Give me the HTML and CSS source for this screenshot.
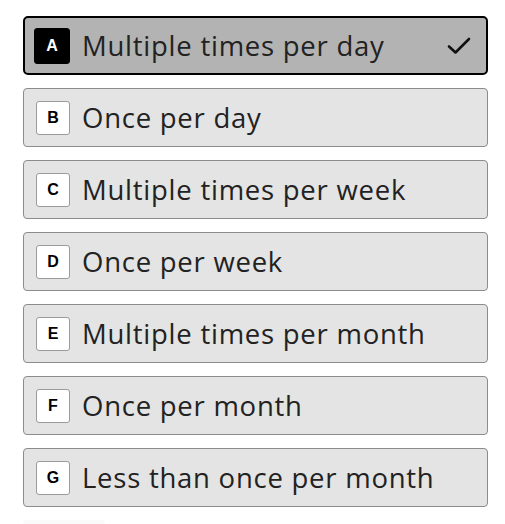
FILE: index.html
```html
<!DOCTYPE html>
<html>
<head>
<meta charset="utf-8">
<link rel="stylesheet" href="styles.css">
</head>
<body>
<div class="list">
  <div class="choice selected"><span class="key">A</span><span class="label">Multiple times per day</span>
    <svg class="check" width="24" height="18" viewBox="0 0 24 18"><path d="M2 9.5 L8.5 15.5 L22 2" fill="none" stroke="#111" stroke-width="2.6" stroke-linecap="round" stroke-linejoin="round"/></svg>
  </div>
  <div class="choice"><span class="key">B</span><span class="label">Once per day</span></div>
  <div class="choice"><span class="key">C</span><span class="label">Multiple times per week</span></div>
  <div class="choice"><span class="key">D</span><span class="label">Once per week</span></div>
  <div class="choice"><span class="key">E</span><span class="label">Multiple times per month</span></div>
  <div class="choice"><span class="key">F</span><span class="label">Once per month</span></div>
  <div class="choice"><span class="key">G</span><span class="label">Less than once per month</span></div>
  <div class="ghost"></div>
</div>
</body>
</html>
```
FILE: styles.css
```css
html, body { margin: 0; padding: 0; background: #fff; }
.list {
  padding: 16px 18px 0 23px;
  display: flex;
  flex-direction: column;
  gap: 13px;
  font-family: "Open Sans", "Noto Sans", sans-serif;
}
.choice {
  box-sizing: border-box;
  height: 59px;
  width: 465px;
  display: flex;
  align-items: center;
  padding: 0 12px;
  background: #e4e4e4;
  border: 1px solid #8c8c8c;
  border-radius: 4px;
  color: #222;
}
.choice.selected {
  background: #b3b3b3;
  border: 2px solid #000;
  padding: 0 11px 0 9px;
  border-radius: 5px;
}
.key {
  box-sizing: border-box;
  width: 34px;
  height: 34px;
  flex: none;
  display: flex;
  align-items: center;
  justify-content: center;
  background: #fff;
  border: 1px solid #9a9a9a;
  border-radius: 3px;
  font-family: "Liberation Sans", Arial, sans-serif;
  font-weight: 700;
  font-size: 16px;
  color: #000;
}
.selected .key {
  background: #000;
  color: #fff;
  border-color: #000;
  width: 36px;
  height: 36px;
}
.label {
  margin-left: 12px;
  font-size: 27.5px;
  font-weight: 400;
  letter-spacing: 0.75px;
  flex: 1;
}
.check { flex: none; margin-right: 4px; }
.ghost {
  width: 82px;
  height: 20px;
  background: #fafafa;
  border-radius: 4px;
}
```
